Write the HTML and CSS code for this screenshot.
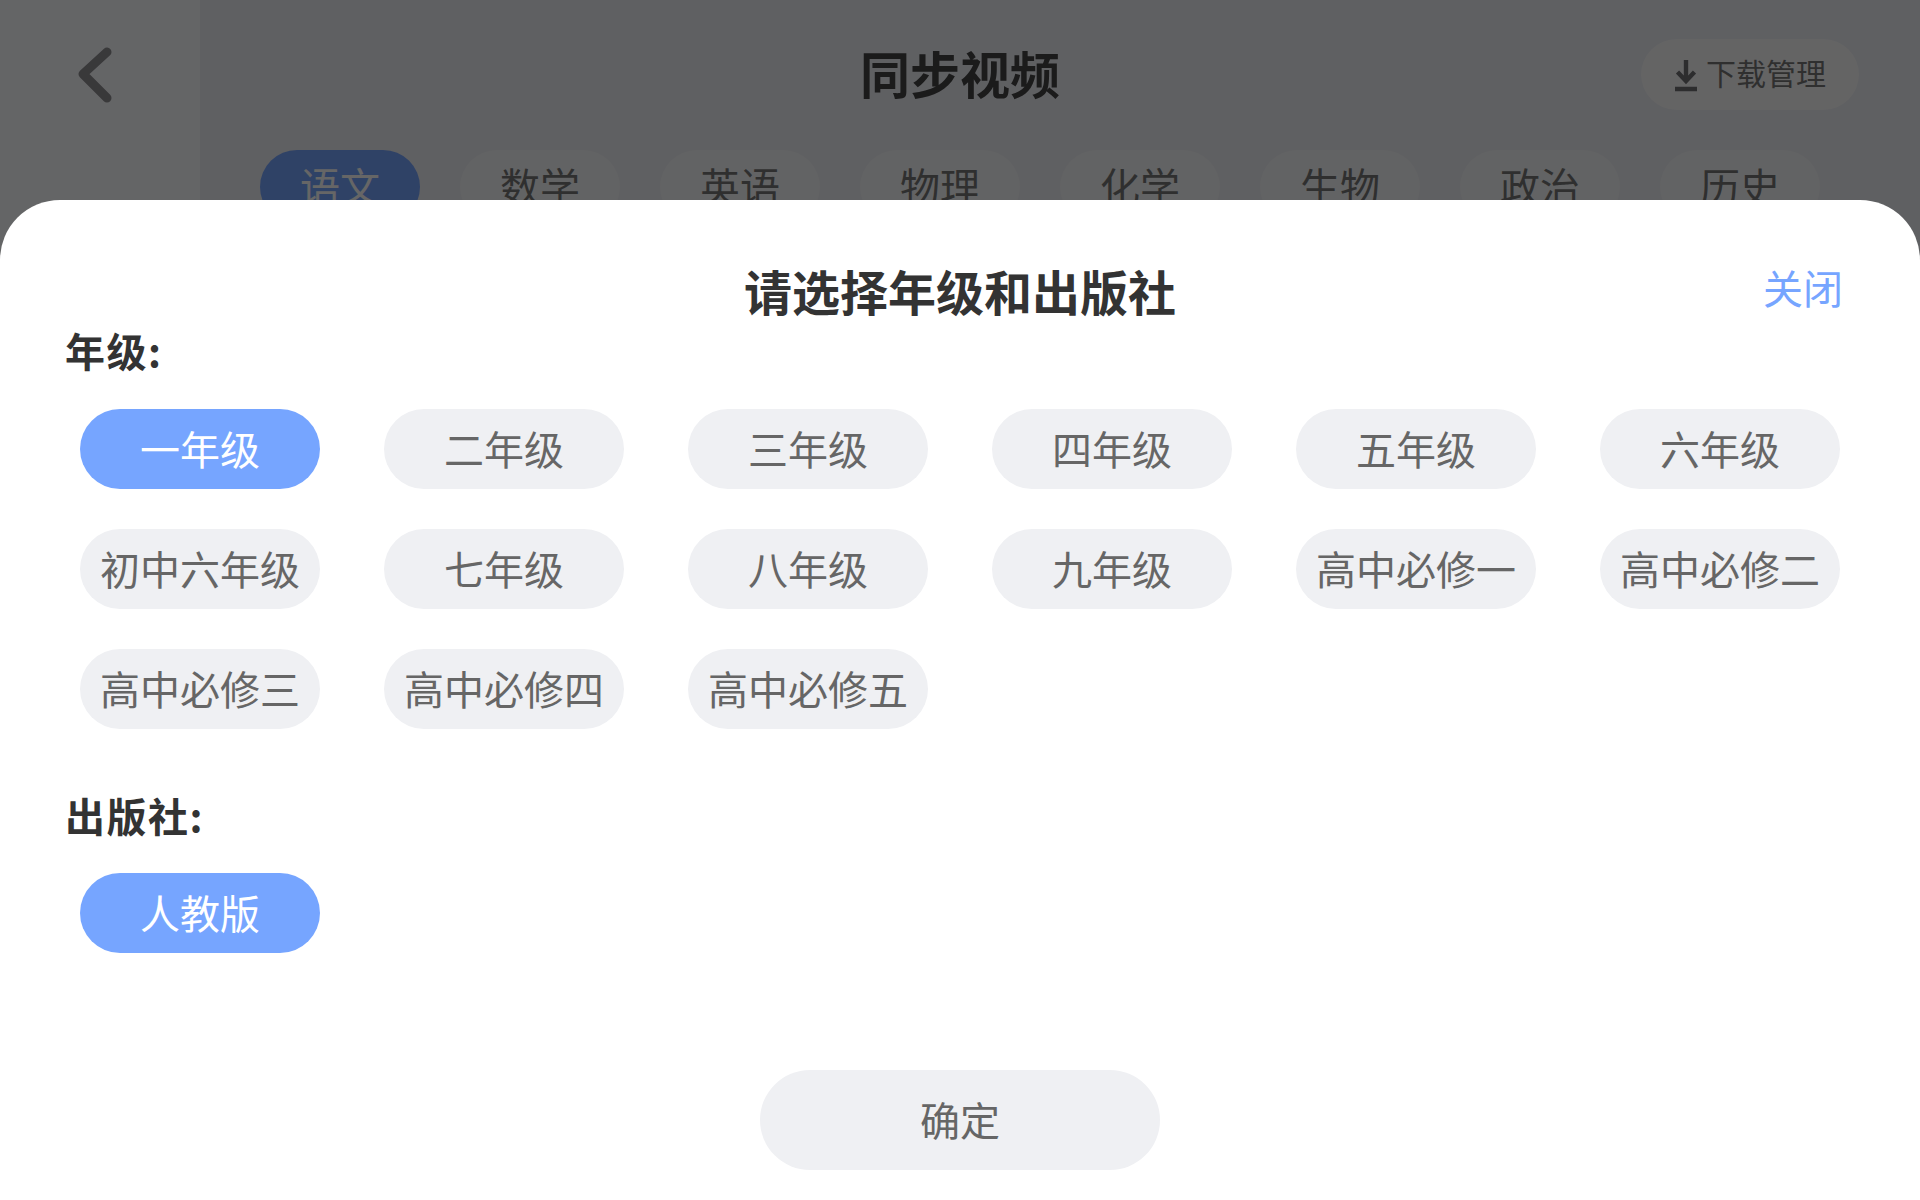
FILE: index.html
```html
<!DOCTYPE html>
<html lang="zh-CN">
<head>
<meta charset="utf-8">
<title>同步视频</title>
<link rel="stylesheet" href="styles.css">
</head>
<body>
<div class="page">
  <aside class="rail">
    <svg class="back" viewBox="0 0 40 60" width="40" height="60" aria-hidden="true"><path d="M33 8 L9 30 L33 54"/></svg>
  </aside>
  <main class="main">
    <header class="topbar">
      <h1 class="page-title">同步视频</h1>
      <button class="download">
        <svg class="download-icon" viewBox="0 0 24 36" width="24" height="36" aria-hidden="true"><path d="M12 3 V25 M3.5 15 L12 24 L20.5 15 M1 32 H23"/></svg>
        <span class="download-text">下载管理</span>
      </button>
    </header>
    <nav class="tabs">
      <span class="tab tab-active">语文</span>
      <span class="tab">数学</span>
      <span class="tab">英语</span>
      <span class="tab">物理</span>
      <span class="tab">化学</span>
      <span class="tab">生物</span>
      <span class="tab">政治</span>
      <span class="tab">历史</span>
    </nav>
  </main>
  <div class="mask"></div>
  <section class="sheet">
    <div class="sheet-head">
      <span></span>
      <h2 class="sheet-title">请选择年级和出版社</h2>
      <a class="close">关闭</a>
    </div>
    <h3 class="label label-first">年级:</h3>
    <div class="pills">
      <span class="pill pill-on">一年级</span>
      <span class="pill">二年级</span>
      <span class="pill">三年级</span>
      <span class="pill">四年级</span>
      <span class="pill">五年级</span>
      <span class="pill">六年级</span>
      <span class="pill">初中六年级</span>
      <span class="pill">七年级</span>
      <span class="pill">八年级</span>
      <span class="pill">九年级</span>
      <span class="pill">高中必修一</span>
      <span class="pill">高中必修二</span>
      <span class="pill">高中必修三</span>
      <span class="pill">高中必修四</span>
      <span class="pill">高中必修五</span>
    </div>
    <h3 class="label label-second">出版社:</h3>
    <div class="pills">
      <span class="pill pill-on">人教版</span>
    </div>
    <button class="confirm">确定</button>
  </section>
</div>
</body>
</html>
```
FILE: styles.css
```css
* { box-sizing: border-box; }
html, body { margin: 0; padding: 0; }
body {
  font-family: "Noto Sans CJK SC", "Noto Sans", sans-serif;
  background: #fff;
}
h1, h2, h3 { margin: 0; }
button { font-family: inherit; border: 0; padding: 0; }

.page {
  position: relative;
  display: flex;
  width: 1920px;
  height: 1200px;
  overflow: hidden;
  background: #fff;
}
.rail {
  flex: 0 0 200px;
  background: #fbfcff;
  padding: 44px 0 0 74px;
}
.back { display: block; }
.back path {
  fill: none;
  stroke: #8e8e92;
  stroke-width: 9;
  stroke-linecap: round;
  stroke-linejoin: round;
}
.main {
  flex: 1;
  background: #edeff5;
  padding: 39px 61px 0 60px;
}
.topbar {
  display: grid;
  grid-template-columns: 600px auto 1fr;
  align-items: center;
  height: 71px;
}
.page-title {
  grid-column: 2;
  font-size: 50px;
  line-height: 66px;
  padding-bottom: 5px;
  font-weight: 700;
  color: #444;
}
.download {
  grid-column: 3;
  justify-self: end;
  display: flex;
  align-items: center;
  gap: 8px;
  width: 218px;
  height: 71px;
  padding-left: 33px;
  border-radius: 36px;
  background: #fafafb;
  font-size: 30px;
  color: #777;
}
.download-icon { display: block; }
.download-icon path {
  fill: none;
  stroke: #707074;
  stroke-width: 4.4;
}
.download-text { margin-bottom: 5px; }
.tabs {
  display: flex;
  gap: 40px;
  margin-top: 40px;
}
.tab {
  flex: 0 0 160px;
  height: 74px;
  line-height: 70px;
  text-align: center;
  border-radius: 37px;
  font-size: 40px;
  color: #777;
  background: #f6f7f9;
}
.tab-active { background: #76a5ff; color: #fff; }

.mask {
  position: absolute;
  inset: 0;
  background: rgba(0, 0, 0, 0.6);
}
.sheet {
  position: absolute;
  left: 0;
  right: 0;
  top: 200px;
  bottom: 0;
  display: flex;
  flex-direction: column;
  align-items: flex-start;
  padding: 60px 0 0 65px;
  background: #fff;
  border-radius: 60px 60px 0 0;
}
.sheet-head {
  align-self: stretch;
  display: grid;
  grid-template-columns: 1fr auto 1fr;
  margin-left: -65px;
}
.sheet-title {
  font-size: 48px;
  line-height: 60px;
  font-weight: 700;
  color: #333;
}
.close {
  justify-self: end;
  margin: 2px 77px 0 0;
  font-size: 40px;
  line-height: 50px;
  color: #76a5ff;
}
.label {
  font-size: 40px;
  line-height: 56px;
  font-weight: 700;
  letter-spacing: 1.5px;
  color: #333;
}
.label-first { margin: 2px 0 31px; }
.label-second { margin: 58px 0 30px; }
.pills {
  display: grid;
  grid-template-columns: repeat(6, 240px);
  gap: 40px 64px;
  margin-left: 15px;
}
.pill {
  height: 80px;
  line-height: 78px;
  text-align: center;
  border-radius: 40px;
  font-size: 40px;
  color: #666;
  background: #eff0f3;
}
.pill-on { background: #76a5ff; color: #fff; }
.confirm {
  align-self: center;
  width: 400px;
  height: 100px;
  margin: 117px 0 0 -65px;
  padding-bottom: 2px;
  border-radius: 50px;
  font-size: 40px;
  color: #666;
  background: #eff0f3;
}
```
